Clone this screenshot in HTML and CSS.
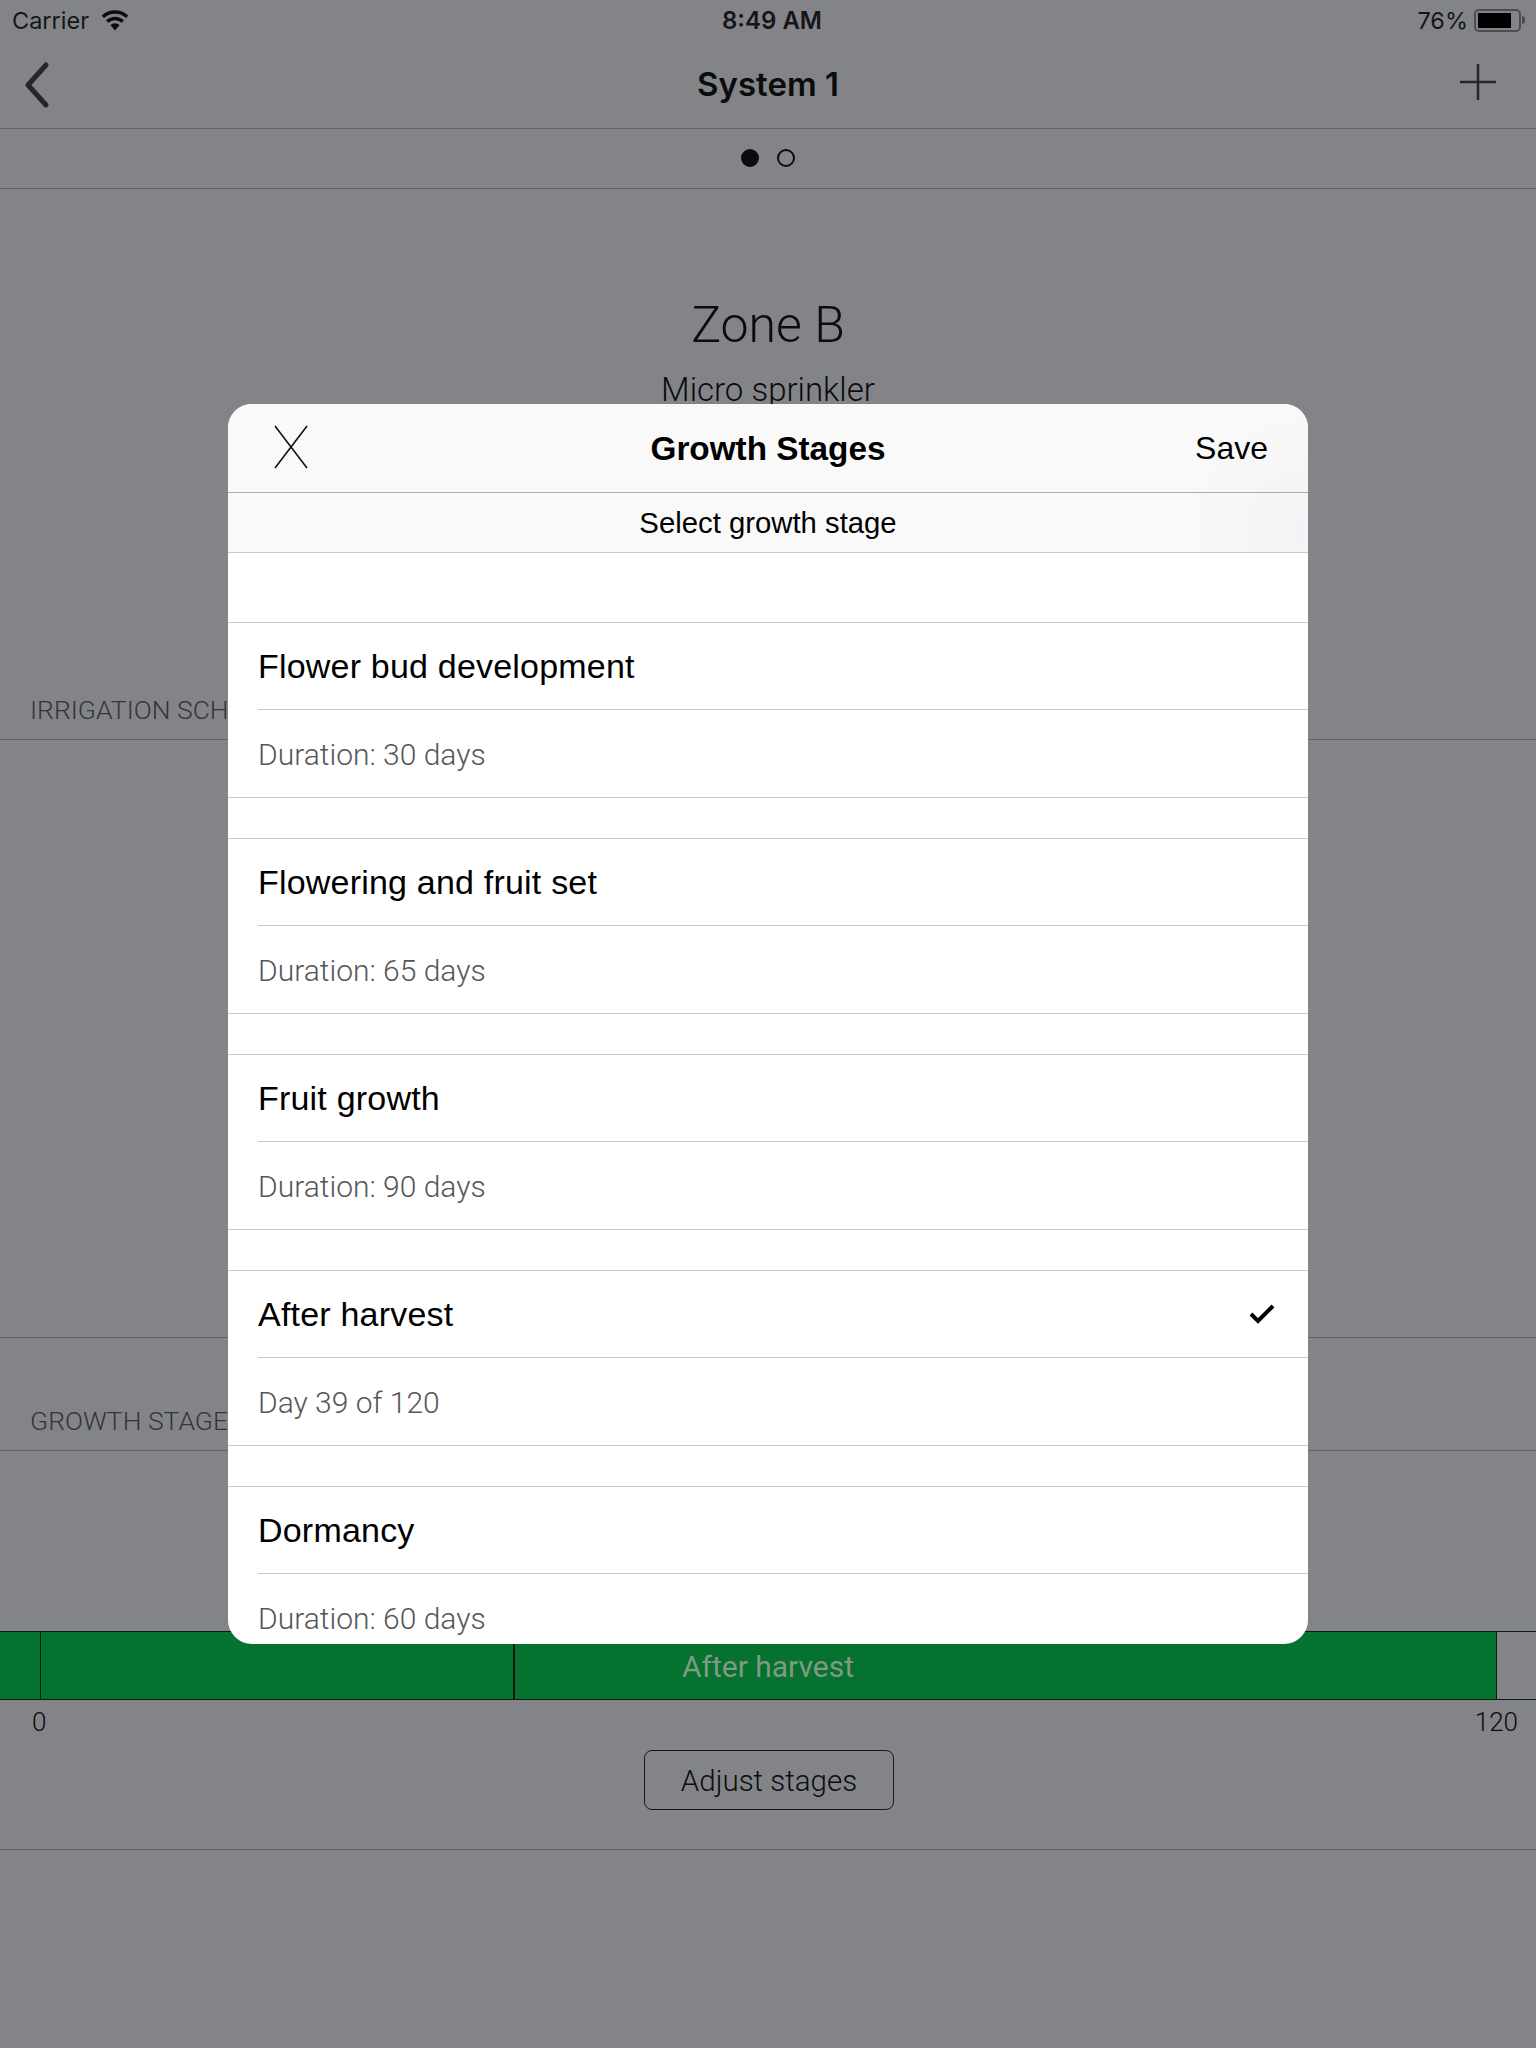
FILE: index.html
```html
<!DOCTYPE html>
<html>
<head>
	<meta http-equiv="Content-Type" content="text/html;charset=utf-8"/>
	<title>Growth Stages</title>
	<link rel="stylesheet" href="styles.css">
</head>
<body>
	<div class="page">
		<div class="status">
			<div class="status-left">
				<span>Carrier</span>
				<svg class="wifi" width="30" height="22" viewBox="0 0 30 22">
					<path d="M15 21.5 L10.4 16 A7 7 0 0 1 19.6 16 Z" fill="#0b0c0f"/>
					<path d="M7.2 12.6 A11.5 11.5 0 0 1 22.8 12.6" fill="none" stroke="#0b0c0f" stroke-width="3.4"/>
					<path d="M2.8 7.8 A18 18 0 0 1 27.2 7.8" fill="none" stroke="#0b0c0f" stroke-width="3.4"/>
				</svg>
			</div>
			<div class="status-time">8:49 AM</div>
			<div class="status-right">
				<span>76%</span>
				<div class="battery"><div class="battery-fill"></div></div>
				<div class="battery-nub"></div>
			</div>
		</div>
		<div class="nav">
			<svg class="nav-icon back" width="40" height="48" viewBox="0 0 40 48">
				<path d="M24 4 L6 24 L24 44" fill="none" stroke="#24262b" stroke-width="5" stroke-linecap="round" stroke-linejoin="round"/>
			</svg>
			<div class="nav-title">System 1</div>
			<svg class="nav-icon" width="36" height="36" viewBox="0 0 36 36">
				<path d="M18 0 V36 M0 18 H36" fill="none" stroke="#24262b" stroke-width="2.5"/>
			</svg>
		</div>
		<div class="pager">
			<span class="dot on"></span>
			<span class="dot"></span>
		</div>
		<div class="zone">
			<div class="zone-name">Zone B</div>
			<div class="zone-type">Micro sprinkler</div>
		</div>
		<div class="section-label">IRRIGATION SCHEDULE</div>
		<div class="schedule"></div>
		<div class="section-label">GROWTH STAGES</div>
		<div class="stages-empty"></div>
		<div class="bar">
			<div class="seg seg-a"></div>
			<div class="seg seg-b"></div>
			<div class="seg seg-c"></div>
			<div class="bar-label">After harvest</div>
		</div>
		<div class="axis">
			<span>0</span>
			<span>120</span>
		</div>
		<div class="adjust-row">
			<div class="adjust">Adjust stages</div>
		</div>
	</div>

	<div class="modal">
		<div class="modal-top">
			<div class="modal-head">
				<svg class="close" width="34" height="44" viewBox="0 0 34 44">
					<path d="M1 1 L33 43 M33 1 L1 43" fill="none" stroke="#111" stroke-width="1.6"/>
				</svg>
				<div class="modal-title">Growth Stages</div>
				<div class="save">Save</div>
			</div>
			<div class="modal-sub">Select growth stage</div>
		</div>
		<div class="spacer"></div>
		<div class="stage">
			<div class="stage-name">Flower bud development</div>
			<div class="stage-info">Duration: 30 days</div>
		</div>
		<div class="stage">
			<div class="stage-name">Flowering and fruit set</div>
			<div class="stage-info">Duration: 65 days</div>
		</div>
		<div class="stage">
			<div class="stage-name">Fruit growth</div>
			<div class="stage-info">Duration: 90 days</div>
		</div>
		<div class="stage">
			<div class="stage-name">After harvest
				<svg class="check" width="26" height="20" viewBox="0 0 26 20">
					<path d="M2 10 L9 17 L24 2" fill="none" stroke="#000" stroke-width="4"/>
				</svg>
			</div>
			<div class="stage-info">Day 39 of 120</div>
		</div>
		<div class="stage">
			<div class="stage-name">Dormancy</div>
			<div class="stage-info">Duration: 60 days</div>
		</div>
	</div>
</body>
</html>
```

FILE: styles.css
```css
*{
	margin: 0;
	padding: 0;
	box-sizing: border-box;
}
html, body{
	width: 1536px;
	height: 2048px;
	overflow: hidden;
}
body{
	position: relative;
	background: #838488;
	color: #0b0c0f;
	font-family: "Liberation Sans", Arial, sans-serif;
}
.page{
	display: flex;
	flex-direction: column;
	height: 2048px;
}

/* status bar */
.status{
	height: 40px;
	display: flex;
	align-items: center;
	justify-content: space-between;
	position: relative;
	padding: 0 11px 0 12px;
	font-family: Inter, sans-serif;
	font-size: 23.5px;
	color: #15161a;
}
.status-left, .status-right{
	display: flex;
	align-items: center;
}
.wifi{
	margin-left: 11px;
}
.status-time{
	position: absolute;
	left: 722px;
	font-size: 24px;
	font-weight: 600;
}
.battery{
	width: 47px;
	height: 23px;
	margin-left: 6px;
	border: 2px solid #4c4d52;
	border-radius: 5px;
	padding: 2px;
}
.battery-fill{
	width: 33px;
	height: 15px;
	background: #000;
}
.battery-nub{
	width: 3px;
	height: 8px;
	margin-left: 1px;
	background: #4c4d52;
	border-radius: 0 3px 3px 0;
}

/* nav */
.nav{
	height: 89px;
	display: flex;
	align-items: center;
	justify-content: space-between;
	position: relative;
	padding: 0 40px 4px 22px;
	border-bottom: 1px solid #626368;
}
.back{
	margin-top: 5px;
}
.nav-title{
	position: absolute;
	left: 0;
	right: 0;
	top: 24px;
	text-align: center;
	font-family: Inter, sans-serif;
	font-size: 33px;
	font-weight: 600;
}
.pager{
	height: 60px;
	display: flex;
	align-items: center;
	justify-content: center;
	gap: 18px;
	padding-bottom: 1px;
	border-bottom: 1px solid #626368;
}
.dot{
	width: 18px;
	height: 18px;
	border-radius: 50%;
	border: 2px solid #0b0c0f;
}
.dot.on{
	background: #0b0c0f;
}

.zone{
	height: 507px;
	padding-top: 108px;
	text-align: center;
	font-family: Roboto, sans-serif;
	font-weight: 300;
}
.zone-name{
	font-size: 50px;
	line-height: 56px;
}
.zone-type{
	font-size: 33px;
	line-height: 40px;
	margin-top: 17px;
}
.section-label{
	height: 44px;
	padding-left: 30px;
	font-family: Roboto, sans-serif;
	font-weight: 300;
	font-size: 26.5px;
	line-height: 28px;
	color: #333439;
	border-bottom: 1px solid #626368;
}
.schedule{
	height: 598px;
	border-bottom: 1px solid #626368;
	margin-bottom: 69px;
}
.stages-empty{
	height: 180px;
}

/* growth bar */
.bar{
	height: 69px;
	display: flex;
	position: relative;
	border-top: 1px solid #0f1a14;
	border-bottom: 1px solid #0f1a14;
}
.seg{
	background: #067230;
	border-right: 1px solid #0b1a10;
}
.seg-a{
	width: 41px;
}
.seg-b{
	width: 474px;
	border-right-width: 2px;
}
.seg-c{
	width: 982px;
}
.bar-label{
	position: absolute;
	top: 0;
	left: 0;
	right: 0;
	text-align: center;
	font-family: Roboto, sans-serif;
	font-size: 30px;
	line-height: 69px;
	color: #7f9a85;
}
.axis{
	display: flex;
	justify-content: space-between;
	padding: 7px 18px 0 32px;
	height: 50px;
	font-family: Roboto, sans-serif;
	font-weight: 300;
	font-size: 26px;
	line-height: 30px;
}
.adjust-row{
	height: 100px;
	padding-left: 644px;
	border-bottom: 1px solid #626368;
}
.adjust{
	width: 250px;
	height: 60px;
	border: 1px solid #15161a;
	border-radius: 8px;
	text-align: center;
	font-family: Roboto, sans-serif;
	font-weight: 300;
	font-size: 29.5px;
	line-height: 60px;
}

/* modal */
.modal{
	position: absolute;
	left: 228px;
	top: 404px;
	width: 1080px;
	height: 1240px;
	background: #fff;
	border-radius: 24px;
	overflow: hidden;
	color: #000;
}
.modal-top{
	background: radial-gradient(circle at 100% 85%, #f3f3f5 0, #f9f9f9 130px);
}
.modal-head{
	height: 89px;
	display: flex;
	align-items: center;
	justify-content: space-between;
	position: relative;
	padding: 0 40px 0 46px;
	border-bottom: 1px solid #aeaeb0;
}
.close{
	margin-top: -3px;
}
.modal-title{
	position: absolute;
	left: 0;
	right: 0;
	top: 26px;
	text-align: center;
	font-size: 33.3px;
	font-weight: bold;
}
.save{
	font-size: 32px;
}
.modal-sub{
	height: 60px;
	text-align: center;
	font-size: 29.3px;
	line-height: 60px;
	border-bottom: 1px solid #c9c9cb;
}
.spacer{
	height: 69px;
}
.stage{
	margin-bottom: 40px;
	border-top: 1px solid #c9c9cb;
}
.stage-name{
	height: 87px;
	margin-left: 30px;
	padding-right: 33px;
	display: flex;
	align-items: center;
	justify-content: space-between;
	font-size: 34px;
	letter-spacing: .2px;
	border-bottom: 1px solid #c9c9cb;
}
.stage-info{
	height: 88px;
	padding-left: 30px;
	font-family: Roboto, sans-serif;
	font-weight: 300;
	font-size: 30px;
	line-height: 90px;
	color: #55565a;
	border-bottom: 1px solid #c9c9cb;
}
```
